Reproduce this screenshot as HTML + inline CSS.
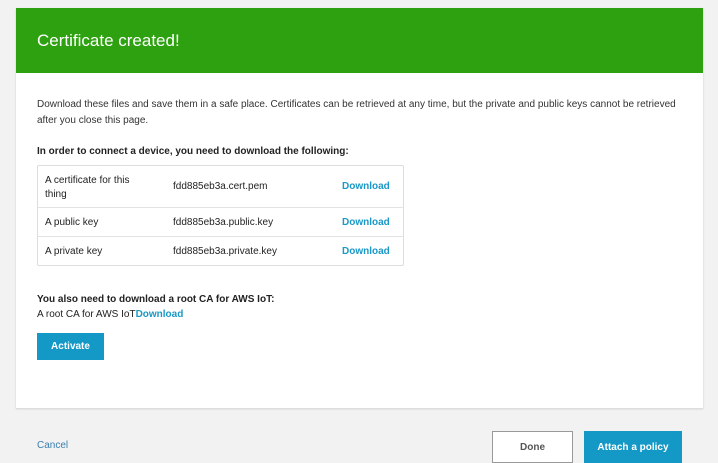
<!DOCTYPE html>
<html><head><style>
body{margin:0;width:718px;height:461px;background:#f2f2f2;font-family:"Liberation Sans",sans-serif;position:relative;overflow:hidden;color:#222}
.a{position:absolute}
.card{left:16px;top:8px;width:687px;height:400px;background:#fff;box-shadow:0 1px 2px rgba(0,0,0,.15)}
.hdr{left:16px;top:8px;width:687px;height:65px;background:#2da10f}
.t{font-size:10px;white-space:nowrap}
.b{font-weight:bold}
.lnk{color:#1a98c7;font-weight:bold;font-size:10px}
.tbl{left:37px;top:165px;width:365px;height:99px;border:1px solid #ddd;border-radius:2px;background:#fff}
.row{border-top:1px solid #e3e3e3;left:0;width:365px}
.btn{background:#1498c5;color:#fff;font-weight:bold;font-size:10px;display:flex;align-items:center;justify-content:center}
</style></head><body>
<div class="a card"></div>
<div class="a hdr"></div>
<div class="a" style="left:37px;top:31px;color:#fff;font-size:17px">Certificate created!</div>
<div class="a t" style="left:37px;top:97px;line-height:16px;color:#333">Download these files and save them in a safe place. Certificates can be retrieved at any time, but the private and public keys cannot be retrieved<br>after you close this page.</div>
<div class="a t b" style="left:37px;top:146px">In order to connect a device, you need to download the following:</div>
<div class="a tbl">
<div class="a row" style="top:41px"></div>
<div class="a row" style="top:70px"></div>
<div class="a t" style="left:7px;top:8px;line-height:14px">A certificate for this<br>thing</div>
<div class="a t" style="left:135px;top:15px">fdd885eb3a.cert.pem</div>
<div class="a lnk" style="left:304px;top:15px">Download</div>
<div class="a t" style="left:7px;top:51px">A public key</div>
<div class="a t" style="left:135px;top:51px">fdd885eb3a.public.key</div>
<div class="a lnk" style="left:304px;top:51px">Download</div>
<div class="a t" style="left:7px;top:80px">A private key</div>
<div class="a t" style="left:135px;top:80px">fdd885eb3a.private.key</div>
<div class="a lnk" style="left:304px;top:80px">Download</div>
</div>
<div class="a t b" style="left:37px;top:294px">You also need to download a root CA for AWS IoT:</div>
<div class="a t" style="left:37px;top:309px">A root CA for AWS IoT<span class="lnk">Download</span></div>
<div class="a btn" style="left:37px;top:333px;width:67px;height:27px">Activate</div>
<div class="a" style="left:16px;top:408px;width:687px;height:1px;background:#ddd"></div>
<div class="a t" style="left:37px;top:440px;color:#3a7fb0">Cancel</div>
<div class="a" style="left:492px;top:431px;height:32px;border:1px solid #999;background:#fff;font-size:10px;color:#555;font-weight:bold;display:flex;align-items:center;justify-content:center;box-sizing:border-box;width:81px">Done</div>
<div class="a btn" style="left:584px;top:431px;width:98px;height:32px">Attach a policy</div>
</body></html>
